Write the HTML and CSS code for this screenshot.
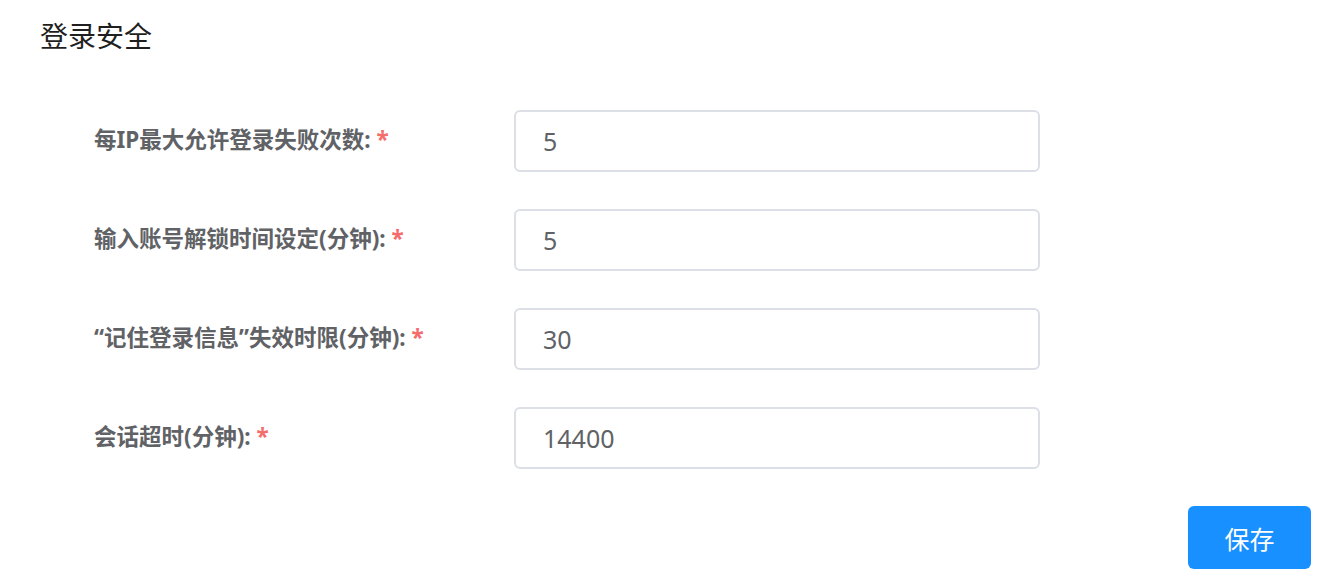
FILE: index.html
```html
<!DOCTYPE html>
<html lang="zh-CN">
<head>
<meta charset="utf-8">
<title>登录安全</title>
<link rel="stylesheet" href="styles.css">
</head>
<body>
<div class="page">
  <h1 class="title">登录安全</h1>
  <form class="form">
    <div class="row">
      <label class="label">每IP最大允许登录失败次数: <span class="req">*</span></label>
      <div class="input">5</div>
    </div>
    <div class="row">
      <label class="label">输入账号解锁时间设定(分钟): <span class="req">*</span></label>
      <div class="input">5</div>
    </div>
    <div class="row">
      <label class="label">“记住登录信息”失效时限(分钟): <span class="req">*</span></label>
      <div class="input">30</div>
    </div>
    <div class="row">
      <label class="label">会话超时(分钟): <span class="req">*</span></label>
      <div class="input">14400</div>
    </div>
    <div class="actions">
      <button type="button" class="btn">保存</button>
    </div>
  </form>
</div>
</body>
</html>
```

FILE: styles.css
```css
html, body {
  margin: 0;
  padding: 0;
  background: #ffffff;
}
body {
  font-family: "Noto Sans", "Noto Sans CJK SC", sans-serif;
  color: #606266;
}
.page {
  padding: 16px 14px 0 40px;
}
.title {
  margin: 0;
  font-size: 28px;
  font-weight: normal;
  line-height: 40px;
  color: #1f1f1f;
}
.form {
  margin-top: 54px;
  display: flex;
  flex-direction: column;
  gap: 37px;
}
.row {
  display: flex;
  align-items: center;
  padding-left: 54px;
}
.label {
  width: 420px;
  font-size: 22.5px;
  line-height: 28px;
  margin-top: -3px;
  font-weight: bold;
  color: #606266;
}
.req {
  color: #f56c6c;
}
.input {
  box-sizing: border-box;
  width: 526px;
  height: 62px;
  border: 2px solid #dcdfe6;
  border-radius: 6px;
  padding: 0 27px;
  display: flex;
  align-items: center;
  font-size: 25px;
  color: #606266;
}
.actions {
  display: flex;
  justify-content: flex-end;
}
.btn {
  width: 123px;
  height: 63px;
  border: none;
  border-radius: 6px;
  background: #1890ff;
  color: #ffffff;
  font-family: "Noto Sans CJK SC", sans-serif;
  font-size: 25px;
  cursor: pointer;
}
```
